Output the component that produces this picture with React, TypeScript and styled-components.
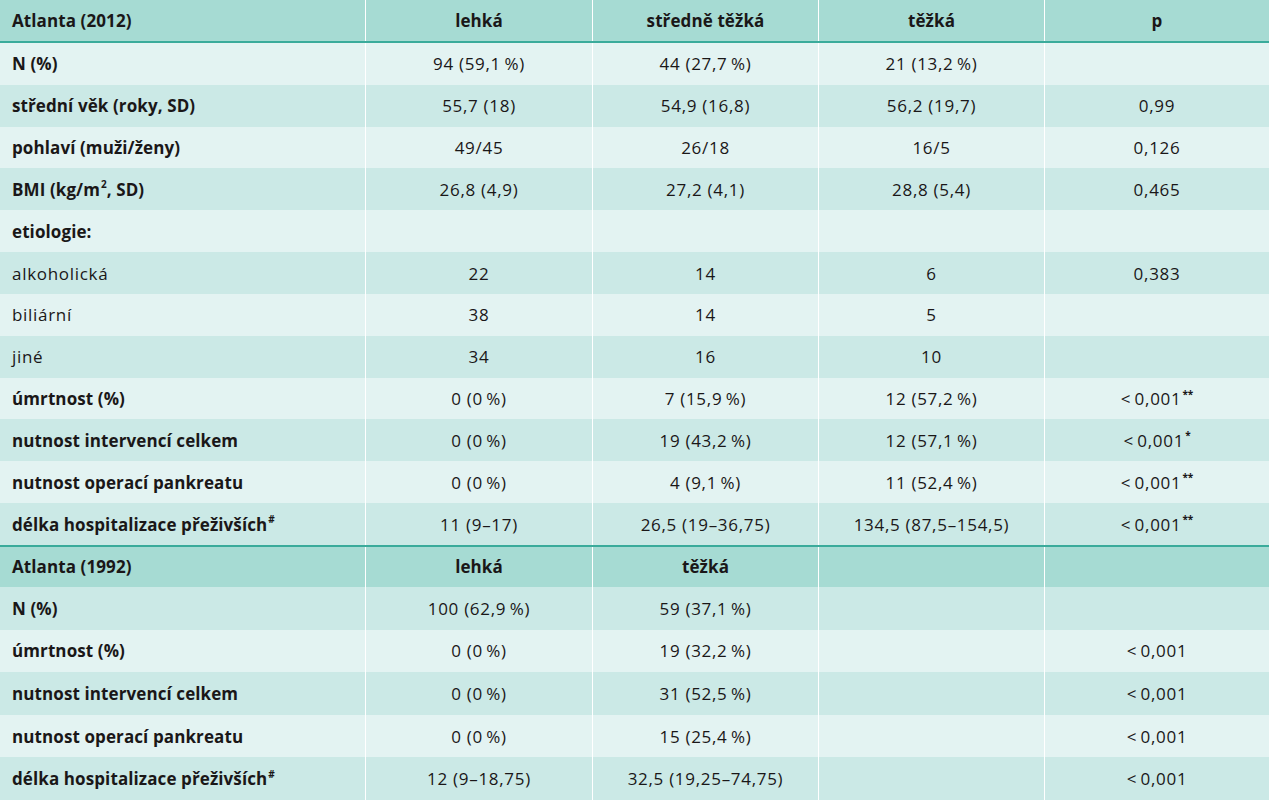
import React from "react";
import styled, { createGlobalStyle } from "styled-components";

const Global = createGlobalStyle`
  html, body { margin: 0; padding: 0; background: #ffffff; }
  body { font-family: "Open Sans", "Noto Sans", sans-serif; color: #1a1718; }
`;

const C = {
  head: "#a6dbd3",
  light: "#e3f3f2",
  dark: "#cbe9e6",
  line: "#3aab9b",
};

const Table = styled.div`
  width: 1269px;
  display: flex;
  flex-direction: column;
`;

const Section = styled.div`
  display: flex;
  flex-direction: column;
`;

const Row = styled.div<{ $bg: string; $h: number; $ruleTop?: boolean; $ruleBottom?: boolean }>`
  display: grid;
  grid-template-columns: 366px 227px 226px 226px 224px;
  height: ${(p) => p.$h}px;
  background: ${(p) => p.$bg};
  border-top: ${(p) => (p.$ruleTop ? `2px solid ${C.line}` : "none")};
  border-bottom: ${(p) => (p.$ruleBottom ? `2px solid ${C.line}` : "none")};
  box-sizing: border-box;
`;

const Cell = styled.div<{ $left?: boolean; $bold?: boolean; $last?: boolean }>`
  display: flex;
  align-items: center;
  justify-content: ${(p) => (p.$left ? "flex-start" : "center")};
  padding: ${(p) => (p.$left ? "0 0 0 12px" : "0")};
  font-size: 17px;
  font-weight: ${(p) => (p.$bold ? 700 : 400)};
  letter-spacing: ${(p) => (p.$bold ? "0.1px" : "0.7px")};
  white-space: nowrap;
  border-right: ${(p) => (p.$last ? "none" : "1.5px solid #ffffff")};
  box-sizing: border-box;
`;

const Sup = styled.sup`
  font-size: 10px;
  font-weight: 700;
  line-height: 0;
  vertical-align: 0;
  position: relative;
  top: -0.5em;
  margin-left: 1px;
  letter-spacing: 0;
`;

type RowData = {
  label: React.ReactNode;
  bold?: boolean;
  vals: React.ReactNode[];
};

const S = "\u2009";

const stars = (n: number) => <Sup>{"*".repeat(n)}</Sup>;
const hash = <Sup>#</Sup>;

const rows2012: RowData[] = [
  { label: "N (%)", bold: true, vals: [`94 (59,1${S}%)`, `44 (27,7${S}%)`, `21 (13,2${S}%)`, ""] },
  { label: "střední věk (roky, SD)", bold: true, vals: ["55,7 (18)", "54,9 (16,8)", "56,2 (19,7)", "0,99"] },
  { label: "pohlaví (muži/ženy)", bold: true, vals: ["49/45", "26/18", "16/5", "0,126"] },
  {
    label: (
      <>
        BMI (kg/m<Sup>2</Sup>, SD)
      </>
    ),
    bold: true,
    vals: ["26,8 (4,9)", "27,2 (4,1)", "28,8 (5,4)", "0,465"],
  },
  { label: "etiologie:", bold: true, vals: ["", "", "", ""] },
  { label: "alkoholická", vals: ["22", "14", "6", "0,383"] },
  { label: "biliární", vals: ["38", "14", "5", ""] },
  { label: "jiné", vals: ["34", "16", "10", ""] },
  {
    label: "úmrtnost (%)",
    bold: true,
    vals: [`0 (0${S}%)`, `7 (15,9${S}%)`, `12 (57,2${S}%)`, <>{`<${S}0,001`}{stars(2)}</>],
  },
  {
    label: "nutnost intervencí celkem",
    bold: true,
    vals: [`0 (0${S}%)`, `19 (43,2${S}%)`, `12 (57,1${S}%)`, <>{`<${S}0,001`}{stars(1)}</>],
  },
  {
    label: "nutnost operací pankreatu",
    bold: true,
    vals: [`0 (0${S}%)`, `4 (9,1${S}%)`, `11 (52,4${S}%)`, <>{`<${S}0,001`}{stars(2)}</>],
  },
  {
    label: <>délka hospitalizace přeživších{hash}</>,
    bold: true,
    vals: ["11 (9–17)", "26,5 (19–36,75)", "134,5 (87,5–154,5)", <>{`<${S}0,001`}{stars(2)}</>],
  },
];

const rows1992: RowData[] = [
  { label: "N (%)", bold: true, vals: [`100 (62,9${S}%)`, `59 (37,1${S}%)`, "", ""] },
  { label: "úmrtnost (%)", bold: true, vals: [`0 (0${S}%)`, `19 (32,2${S}%)`, "", `<${S}0,001`] },
  { label: "nutnost intervencí celkem", bold: true, vals: [`0 (0${S}%)`, `31 (52,5${S}%)`, "", `<${S}0,001`] },
  { label: "nutnost operací pankreatu", bold: true, vals: [`0 (0${S}%)`, `15 (25,4${S}%)`, "", `<${S}0,001`] },
  {
    label: <>délka hospitalizace přeživších{hash}</>,
    bold: true,
    vals: ["12 (9–18,75)", "32,5 (19,25–74,75)", "", `<${S}0,001`],
  },
];

function DataRow({ r, i, h, startDark }: { r: RowData; i: number; h: number; startDark?: boolean }) {
  const dark = startDark ? i % 2 === 0 : i % 2 === 1;
  return (
    <Row $bg={dark ? C.dark : C.light} $h={h}>
      <Cell $left $bold={r.bold}>
        {r.label}
      </Cell>
      {r.vals.map((v, k) => (
        <Cell key={k} $last={k === r.vals.length - 1}>
          {v}
        </Cell>
      ))}
    </Row>
  );
}

export default function App() {
  return (
    <>
      <Global />
      <Table>
        <Section>
          <Row $bg={C.head} $h={43} $ruleBottom>
            <Cell $left $bold>Atlanta (2012)</Cell>
            <Cell $bold>lehká</Cell>
            <Cell $bold>středně těžká</Cell>
            <Cell $bold>těžká</Cell>
            <Cell $bold $last>p</Cell>
          </Row>
          {rows2012.map((r, i) => (
            <DataRow key={i} r={r} i={i} h={41.83} />
          ))}
        </Section>
        <Section>
          <Row $bg={C.head} $h={42} $ruleTop>
            <Cell $left $bold>Atlanta (1992)</Cell>
            <Cell $bold>lehká</Cell>
            <Cell $bold>těžká</Cell>
            <Cell />
            <Cell $last />
          </Row>
          {rows1992.map((r, i) => (
            <DataRow key={i} r={r} i={i} h={42.6} startDark />
          ))}
        </Section>
      </Table>
    </>
  );
}
